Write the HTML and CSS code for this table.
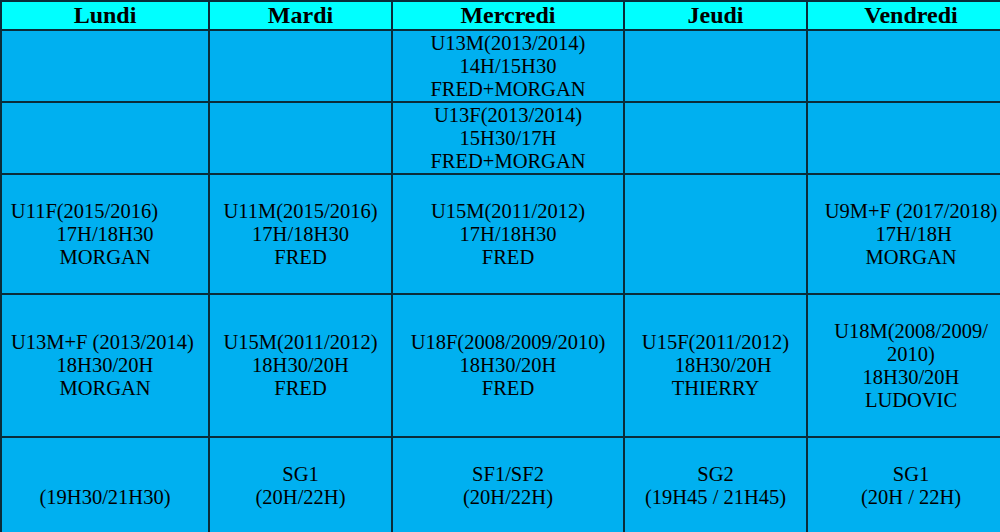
FILE: index.html
```html
<!DOCTYPE html>
<html lang="fr">
<head>
<meta charset="utf-8">
<title>Planning</title>
<link rel="stylesheet" href="styles.css">
</head>
<body>
<table class="planning">
  <colgroup>
    <col class="c-wide">
    <col class="c-narrow">
    <col class="c-mid">
    <col class="c-narrow">
    <col class="c-wide">
  </colgroup>
  <thead>
    <tr class="r-head">
      <th>Lundi</th>
      <th>Mardi</th>
      <th>Mercredi</th>
      <th>Jeudi</th>
      <th>Vendredi</th>
    </tr>
  </thead>
  <tbody>
    <tr class="r-short">
      <td></td>
      <td></td>
      <td>U13M(2013/2014)<br>14H/15H30<br>FRED+MORGAN</td>
      <td></td>
      <td></td>
    </tr>
    <tr class="r-short">
      <td></td>
      <td></td>
      <td>U13F(2013/2014)<br>15H30/17H<br>FRED+MORGAN</td>
      <td></td>
      <td></td>
    </tr>
    <tr class="r-mid">
      <td>U11F(2015/2016)&nbsp;&nbsp;&nbsp;&nbsp;&nbsp;&nbsp;&nbsp;&nbsp;<br>17H/18H30<br>MORGAN</td>
      <td>U11M(2015/2016)<br>17H/18H30<br>FRED</td>
      <td>U15M(2011/2012)<br>17H/18H30<br>FRED</td>
      <td></td>
      <td>U9M+F (2017/2018)<br>&nbsp;17H/18H<br>MORGAN</td>
    </tr>
    <tr class="r-tall">
      <td>U13M+F (2013/2014)&nbsp;<br>18H30/20H<br>MORGAN</td>
      <td>U15M(2011/2012)<br>18H30/20H<br>FRED</td>
      <td>U18F(2008/2009/2010)<br>18H30/20H<br>FRED</td>
      <td>U15F(2011/2012)<br>&nbsp;&nbsp;&nbsp;18H30/20H<br>THIERRY</td>
      <td>U18M(2008/2009/<br>2010)<br>18H30/20H<br>LUDOVIC</td>
    </tr>
    <tr class="r-last">
      <td>&nbsp;<br>(19H30/21H30)</td>
      <td>SG1<br>(20H/22H)</td>
      <td>SF1/SF2<br>(20H/22H)</td>
      <td>SG2<br>(19H45 / 21H45)</td>
      <td>SG1<br>(20H / 22H)</td>
    </tr>
  </tbody>
</table>
</body>
</html>
```

FILE: styles.css
```css
html, body {
  margin: 0;
  padding: 0;
  overflow: hidden;
  background: #00b0f0;
}

.planning {
  border-collapse: collapse;
  table-layout: fixed;
  width: 1015px;
  font-family: "Liberation Serif", "Times New Roman", serif;
  color: #000;
}

.c-wide { width: 208px; }
.c-narrow { width: 183px; }
.c-mid { width: 232px; }

.planning th,
.planning td {
  border: 2px solid #0a2c3a;
  padding: 0 2px;
  text-align: center;
  vertical-align: middle;
  white-space: nowrap;
}

.planning th {
  background: #00ffff;
  font-size: 24px;
  font-weight: bold;
  line-height: 27px;
}

.planning td {
  background: #00b0f0;
  font-size: 20.5px;
  line-height: 23px;
}

.r-head { height: 29px; }
.r-short { height: 72px; }
.r-mid { height: 120px; }
.r-tall { height: 143px; }
.r-last { height: 97px; }
```
